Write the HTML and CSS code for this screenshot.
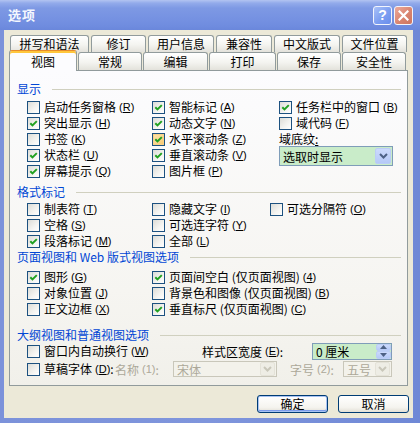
FILE: index.html
```html
<!DOCTYPE html>
<html lang="zh-CN">
<head>
<meta charset="utf-8">
<title>选项</title>
<link rel="stylesheet" href="styles.css">
</head>
<body>
<div class="win">
  <div class="title">
    <span class="ttext">选项</span>
    <span class="tbtn help">?</span>
    <span class="tbtn close"><svg width="11" height="11" viewBox="0 0 11 11"><path d="M1.5 1.5 L9.5 9.5 M9.5 1.5 L1.5 9.5" stroke="#fff" stroke-width="2.2" stroke-linecap="square"/></svg></span>
  </div>
  <div class="client">
    <div class="tabrow r1">
      <div class="tab a1">拼写和语法</div>
      <div class="tab a2">修订</div>
      <div class="tab a3">用户信息</div>
      <div class="tab a4">兼容性</div>
      <div class="tab a5">中文版式</div>
      <div class="tab a6">文件位置</div>
    </div>
    <div class="tabrow r2">
      <div class="tab sel b1">视图</div>
      <div class="tab b2">常规</div>
      <div class="tab b3">编辑</div>
      <div class="tab b4">打印</div>
      <div class="tab b5">保存</div>
      <div class="tab b6">安全性</div>
    </div>
    <div class="panel">
      <div class="hd">显示</div>
      <div class="grid g-show">
        <div class="ck"><span class="cb"></span>启动任务窗格<span class="mn">(<u>R</u>)</span></div>
        <div class="ck"><span class="cb on"><svg viewBox="0 0 11 11" width="11" height="11"><path d="M2.3 5.2 L4.5 7.4 L8.8 3.1" stroke="#21A121" stroke-width="2" fill="none"/></svg></span>智能标记<span class="mn">(<u>A</u>)</span></div>
        <div class="ck"><span class="cb on"><svg viewBox="0 0 11 11" width="11" height="11"><path d="M2.3 5.2 L4.5 7.4 L8.8 3.1" stroke="#21A121" stroke-width="2" fill="none"/></svg></span>任务栏中的窗口<span class="mn">(<u>B</u>)</span></div>

        <div class="ck"><span class="cb on"><svg viewBox="0 0 11 11" width="11" height="11"><path d="M2.3 5.2 L4.5 7.4 L8.8 3.1" stroke="#21A121" stroke-width="2" fill="none"/></svg></span>突出显示<span class="mn">(<u>H</u>)</span></div>
        <div class="ck"><span class="cb on"><svg viewBox="0 0 11 11" width="11" height="11"><path d="M2.3 5.2 L4.5 7.4 L8.8 3.1" stroke="#21A121" stroke-width="2" fill="none"/></svg></span>动态文字<span class="mn">(<u>N</u>)</span></div>
        <div class="ck"><span class="cb"></span>域代码<span class="mn">(<u>F</u>)</span></div>

        <div class="ck"><span class="cb"></span>书签<span class="mn">(<u>K</u>)</span></div>
        <div class="ck"><span class="cb on hot"><svg viewBox="0 0 11 11" width="11" height="11"><path d="M2.3 5.2 L4.5 7.4 L8.8 3.1" stroke="#21A121" stroke-width="2" fill="none"/></svg></span>水平滚动条<span class="mn">(<u>Z</u>)</span></div>
        <div class="ck">域底纹<u>:</u></div>

        <div class="ck"><span class="cb on"><svg viewBox="0 0 11 11" width="11" height="11"><path d="M2.3 5.2 L4.5 7.4 L8.8 3.1" stroke="#21A121" stroke-width="2" fill="none"/></svg></span>状态栏<span class="mn">(<u>U</u>)</span></div>
        <div class="ck"><span class="cb on"><svg viewBox="0 0 11 11" width="11" height="11"><path d="M2.3 5.2 L4.5 7.4 L8.8 3.1" stroke="#21A121" stroke-width="2" fill="none"/></svg></span>垂直滚动条<span class="mn">(<u>V</u>)</span></div>
        <div class="select"><span class="val">选取时显示</span><span class="dd"><svg width="9" height="6" viewBox="0 0 9 6"><path d="M1 1 L4.5 4.5 L8 1" stroke="#4D6185" stroke-width="2" fill="none"/></svg></span></div>

        <div class="ck"><span class="cb on"><svg viewBox="0 0 11 11" width="11" height="11"><path d="M2.3 5.2 L4.5 7.4 L8.8 3.1" stroke="#21A121" stroke-width="2" fill="none"/></svg></span>屏幕提示<span class="mn">(<u>Q</u>)</span></div>
        <div class="ck"><span class="cb"></span>图片框<span class="mn">(<u>P</u>)</span></div>
        <div></div>
      </div>

      <div class="hd hd2">格式标记</div>
      <div class="grid g-fmt">
        <div class="ck"><span class="cb"></span>制表符<span class="mn">(<u>T</u>)</span></div>
        <div class="ck"><span class="cb"></span>隐藏文字<span class="mn">(<u>I</u>)</span></div>
        <div class="ck"><span class="cb"></span>可选分隔符<span class="mn">(<u>O</u>)</span></div>

        <div class="ck"><span class="cb"></span>空格<span class="mn">(<u>S</u>)</span></div>
        <div class="ck"><span class="cb"></span>可选连字符<span class="mn">(<u>Y</u>)</span></div>
        <div></div>

        <div class="ck"><span class="cb on"><svg viewBox="0 0 11 11" width="11" height="11"><path d="M2.3 5.2 L4.5 7.4 L8.8 3.1" stroke="#21A121" stroke-width="2" fill="none"/></svg></span>段落标记<span class="mn">(<u>M</u>)</span></div>
        <div class="ck"><span class="cb"></span>全部<span class="mn">(<u>L</u>)</span></div>
        <div></div>
      </div>

      <div class="hd hd3">页面视图和 Web 版式视图选项</div>
      <div class="grid g-page">
        <div class="ck"><span class="cb on"><svg viewBox="0 0 11 11" width="11" height="11"><path d="M2.3 5.2 L4.5 7.4 L8.8 3.1" stroke="#21A121" stroke-width="2" fill="none"/></svg></span>图形<span class="mn">(<u>G</u>)</span></div>
        <div class="ck"><span class="cb on"><svg viewBox="0 0 11 11" width="11" height="11"><path d="M2.3 5.2 L4.5 7.4 L8.8 3.1" stroke="#21A121" stroke-width="2" fill="none"/></svg></span>页面间空白 (仅页面视图)<span class="mn">(<u>4</u>)</span></div>

        <div class="ck"><span class="cb"></span>对象位置<span class="mn">(<u>J</u>)</span></div>
        <div class="ck"><span class="cb"></span>背景色和图像 (仅页面视图)<span class="mn">(<u>B</u>)</span></div>

        <div class="ck"><span class="cb"></span>正文边框<span class="mn">(<u>X</u>)</span></div>
        <div class="ck"><span class="cb on"><svg viewBox="0 0 11 11" width="11" height="11"><path d="M2.3 5.2 L4.5 7.4 L8.8 3.1" stroke="#21A121" stroke-width="2" fill="none"/></svg></span>垂直标尺 (仅页面视图)<span class="mn">(<u>C</u>)</span></div>
      </div>

      <div class="hd hd4">大纲视图和普通视图选项</div>
      <div class="orow">
        <div class="ck w-wrap"><span class="cb"></span>窗口内自动换行<span class="mn">(<u>W</u>)</span></div>
        <div class="lbl w-style">样式区宽度<span class="mn">(<u>E</u>)</span>:</div>
        <div class="spin"><span class="val">0 厘米</span><span class="spbtn"><span class="sp"><svg width="7" height="4" viewBox="0 0 7 4"><path d="M0 4 L3.5 0 L7 4Z" fill="#4D6185"/></svg></span><span class="sp"><svg width="7" height="4" viewBox="0 0 7 4"><path d="M0 0 L3.5 4 L7 0Z" fill="#4D6185"/></svg></span></span></div>
      </div>
      <div class="orow">
        <div class="ck w-draft"><span class="cb"></span>草稿字体<span class="mn">(<u>D</u>)</span>:</div>
        <div class="dis w-name">名称<span class="mn">(1)</span>:</div>
        <div class="combo w-font"><span class="val">宋体</span><span class="dd"><svg width="9" height="6" viewBox="0 0 9 6"><path d="M1 1 L4.5 4.5 L8 1" stroke="#C9C7BA" stroke-width="2" fill="none"/></svg></span></div>
        <div class="dis w-size">字号<span class="mn">(2)</span>:</div>
        <div class="combo w-fsize"><span class="val">五号</span><span class="dd"><svg width="9" height="6" viewBox="0 0 9 6"><path d="M1 1 L4.5 4.5 L8 1" stroke="#C9C7BA" stroke-width="2" fill="none"/></svg></span></div>
      </div>
    </div>
    <div class="btns">
      <div class="btn def">确定</div>
      <div class="btn">取消</div>
    </div>
  </div>
</div>
</body>
</html>
```
FILE: styles.css
```css
* { box-sizing: border-box; }
html, body { margin: 0; padding: 0; }
body {
  width: 420px;
  height: 423px;
  overflow: hidden;
  font-family: "Noto Sans CJK SC", "Noto Sans", sans-serif;
  font-size: 12px;
  color: #000;
  background: #7A93DF;
}
.win {
  width: 420px;
  height: 423px;
  display: flex;
  flex-direction: column;
  background: linear-gradient(90deg, #7C92DA, #7F95DC 50%, #6F88D6);
}
.title {
  height: 30px;
  flex: none;
  display: flex;
  align-items: center;
  padding: 0 7px 0 8px;
  background: linear-gradient(#B3C4F1 0, #93ABEB 3px, #7E99E4 8px, #7692E2 18px, #6F8CDF 26px, #6A87DB 30px);
}
.ttext {
  flex: 1;
  color: #F4F7FE;
  font-weight: bold;
  font-size: 13px;
  letter-spacing: 1px;
  margin-top: -1px;
}
.tbtn {
  width: 19px;
  height: 19px;
  border: 1px solid #F2F5FD;
  border-radius: 3px;
  display: flex;
  align-items: center;
  justify-content: center;
  margin-left: 2px;
}
.help {
  background: linear-gradient(135deg, #A9C1F8, #7C9EF1 55%, #6A8EEC);
  color: #fff;
  font: bold 14px "Liberation Sans", sans-serif;
}
.close {
  background: linear-gradient(135deg, #EDAA9C, #D9846F 55%, #CD7560);
}
.client {
  flex: 1;
  margin: 0 7px 5px 4px;
  background: #ECE9D8;
  display: flex;
  flex-direction: column;
  padding: 5px 5px 0 5px;
}
.tabrow { display: flex; align-items: flex-start; }
.r1 { gap: 2px; margin-left: 1px; height: 17px; }
.r2 { gap: 1px; height: 18px; }
.tab {
  height: 100%;
  border: 1px solid #919B9C;
  border-bottom: none;
  border-radius: 3px 3px 0 0;
  background: linear-gradient(#FFFFFF, #F4F4F0 55%, #E3E2DB);
  display: flex;
  align-items: center;
  justify-content: center;
  line-height: 1;
  flex: none;
}
.r1 .tab { height: 17px; }
.r2 .tab { height: 18px; }
.r2 .tab.sel {
  height: 21px;
  margin-top: -2px;
  position: relative;
  z-index: 1;
  background: #FCFCFE;
  border-top: 1px solid #E68B2C;
  box-shadow: inset 0 2px 0 #FFC73C;
  padding-top: 1px;
}
.a1 { width: 79px; }
.a2 { width: 55px; }
.a3 { width: 66px; }
.a4 { width: 56px; }
.a5 { width: 66px; }
.a6 { width: 65px; }
.b1 { width: 68px; }
.b2 { width: 64px; }
.b3 { width: 65px; }
.b4 { width: 67px; }
.b5 { width: 64px; }
.b6 { width: 64px; }

.panel {
  height: 316px;
  flex: none;
  border: 1px solid #919B9C;
  background: linear-gradient(#FCFCFE, #F6F5F1 70%, #F1F0EA);
  padding-top: 11px;
}
.hd {
  display: flex;
  align-items: center;
  height: 14px;
  line-height: 14px;
  padding: 0 6px 0 7px;
  color: #0046D5;
  white-space: nowrap;
}
.hd::after {
  content: "";
  flex: 1;
  height: 1px;
  background: #D0D0BF;
  margin-left: 11px;
}
.hd2 { margin-top: 6px; }
.hd3 { margin-top: 1px; }
.hd4 { margin-top: 11px; }

.grid {
  display: grid;
  grid-auto-rows: 16px;
  padding-left: 17px;
}
.g-show { grid-template-columns: 125px 127px 1fr; margin-top: 3px; }
.g-fmt { grid-template-columns: 125px 118px 1fr; margin-top: 2px; }
.g-page { grid-template-columns: 125px 1fr; margin-top: 5px; }

.ck {
  display: flex;
  align-items: center;
  white-space: nowrap;
  line-height: 16px;
}
.cb {
  width: 13px;
  height: 13px;
  flex: none;
  border: 1px solid #1C5180;
  background: linear-gradient(135deg, #DCDCD7, #F4F4F1 60%, #FFFFFF);
  margin-right: 4px;
  display: flex;
  align-items: center;
  justify-content: center;
}
.cb.hot {
  background: linear-gradient(135deg, #FEE6A8, #FBDB9A 40%, #F6C56A);
  box-shadow: inset 0 0 0 1px #F8D28A;
}
.mn {
  font-family: "Liberation Sans", sans-serif;
  font-size: 11px;
  margin-left: 3px;
}
.mn u { text-decoration-thickness: 1px; text-underline-offset: 1px; }

.select {
  width: 114px;
  height: 20px;
  margin-top: -1px;
  border: 1px solid #7F9DB9;
  background: #C9ECC9;
  display: flex;
  align-items: center;
  justify-content: space-between;
  padding-left: 3px;
}
.dd {
  width: 16px;
  height: 16px;
  margin-right: 1px;
  border-radius: 2px;
  background: linear-gradient(#CCDAFC, #B5C9F7);
  border: 1px solid #BBCDF6;
  display: flex;
  align-items: center;
  justify-content: center;
}

.orow {
  display: flex;
  align-items: center;
  height: 18px;
  padding-left: 17px;
  white-space: nowrap;
}
.w-wrap { width: 175px; }
.w-style { width: 110px; }
.lbl { display: flex; align-items: center; }
.spin {
  width: 80px;
  height: 17px;
  border: 1px solid #7F9DB9;
  background: #C9ECC9;
  display: flex;
  align-items: center;
  justify-content: space-between;
  padding-left: 3px;
}
.spbtn {
  width: 15px;
  height: 15px;
  margin-right: 0;
  display: flex;
  flex-direction: column;
}
.sp {
  flex: 1;
  display: flex;
  align-items: center;
  justify-content: center;
  background: linear-gradient(#CCDAFC, #B5C9F7);
  border: 1px solid #BBCDF6;
  border-radius: 2px;
}
.w-draft { width: 88px; }
.dis { color: #ACA899; display: flex; align-items: center; }
.w-name { width: 58px; }
.w-size { width: 53px; margin-left: 13px; }
.combo {
  height: 16px;
  border: 1px solid #C9C7BA;
  background: #F3F2EB;
  color: #ACA899;
  display: flex;
  align-items: center;
  justify-content: space-between;
  padding-left: 3px;
}
.combo .dd {
  width: 15px;
  height: 14px;
  background: #EEEDE5;
  border: 1px solid #E4E2D8;
}
.w-font { width: 104px; }
.w-fsize { width: 49px; }

.btns {
  display: flex;
  justify-content: flex-end;
  gap: 10px;
  margin-top: 9px;
  margin-right: -1px;
}
.btn {
  width: 71px;
  height: 18px;
  border: 1px solid #003C74;
  border-radius: 3px;
  background: linear-gradient(#FFFFFF, #F5F4EF 70%, #E3E0D6);
  display: flex;
  align-items: center;
  justify-content: center;
  line-height: 1;
}
.btn.def {
  box-shadow: inset 0 0 0 1px #A8C3F3, inset 0 -1px 0 1px #7C9BEB;
}
```
